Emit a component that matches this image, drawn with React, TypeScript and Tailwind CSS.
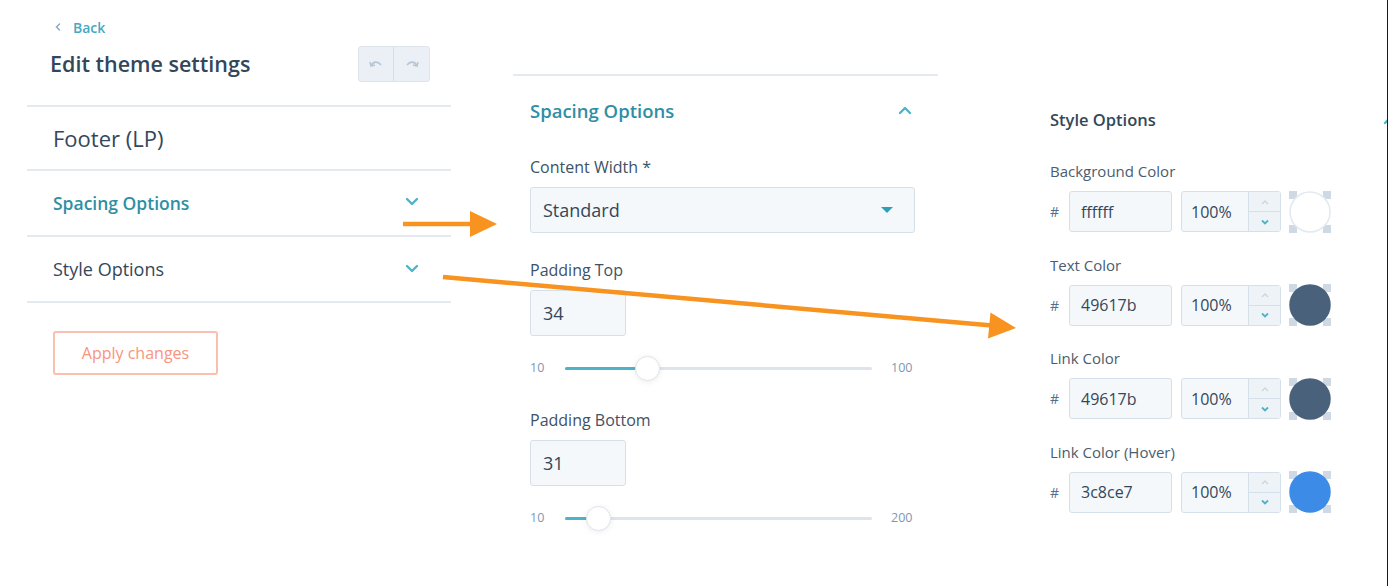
import React from "react";

const ChevronDown = ({ className = "" }: { className?: string }) => (
  <svg width="14" height="9" viewBox="0 0 14 9" className={className}>
    <path d="M2 2 L7 7 L12 2" fill="none" stroke="#4fb3c8" strokeWidth="2.4" strokeLinecap="round" strokeLinejoin="round" />
  </svg>
);

const ChevronUp = ({ className = "" }: { className?: string }) => (
  <svg width="14" height="9" viewBox="0 0 14 9" className={className}>
    <path d="M2 7 L7 2 L12 7" fill="none" stroke="#4fb3c8" strokeWidth="2.4" strokeLinecap="round" strokeLinejoin="round" />
  </svg>
);

const Slider = ({ min, max, pct }: { min: string; max: string; pct: number }) => (
  <div className="flex items-center h-[24px]">
    <span className="w-[35px] text-[12.5px] text-[#7c98b6]">{min}</span>
    <div className="relative w-[307px] h-[3px] bg-[#dfe3eb] rounded-full">
      <div className="absolute left-0 top-0 h-[3px] bg-[#4fb3c8] rounded-full" style={{ width: `${pct}px` }} />
      <div
        className="absolute top-[-11px] w-[25px] h-[25px] rounded-full bg-white border border-[#dfe3eb] shadow-[0_1px_6px_rgba(0,0,0,0.08)]"
        style={{ left: `${pct - 1}px` }}
      />
    </div>
    <span className="ml-[19px] text-[12.5px] text-[#7c98b6]">{max}</span>
  </div>
);

const Swatch = ({ color, border }: { color: string; border?: boolean }) => (
  <svg width="42" height="42" viewBox="0 0 42 42">
    <rect x="0" y="0" width="42" height="42" fill="#ffffff" />
    <rect x="0" y="0" width="8" height="8" fill="#cfd9e4" />
    <rect x="34" y="0" width="8" height="8" fill="#cfd9e4" />
    <rect x="0" y="34" width="8" height="8" fill="#cfd9e4" />
    <rect x="34" y="34" width="8" height="8" fill="#cfd9e4" />
    <circle cx="21" cy="21" r="20" fill={color} stroke={border ? "#e3e9f0" : color} strokeWidth="1.5" />
  </svg>
);

const ColorRow = ({ label, hex, color, border }: { label: string; hex: string; color: string; border?: boolean }) => (
  <div className="flex flex-col">
    <div className="h-[20px] text-[15px] text-[#4a5d70] leading-[20px] mt-[-10px]">{label}</div>
    <div className="flex items-center h-[41px] mt-[10px]">
      <span className="w-[19px] text-[14px] text-[#516f90]">#</span>
      <div className="w-[103px] h-[41px] bg-[#f5f8fa] border border-[#d6e0ea] rounded-[3px] flex items-center pl-[11px] text-[16px] text-[#33475b]">
        {hex}
      </div>
      <div className="ml-[9px] w-[100px] h-[41px] bg-[#f5f8fa] border border-[#d6e0ea] rounded-[3px] flex">
        <div className="flex-1 flex items-center pl-[9px] text-[16px] text-[#33475b]">100%</div>
        <div className="w-[32px] flex flex-col border-l border-[#d6e0ea] bg-[#eef3f8]">
          <div className="flex-1 flex items-center justify-center border-b border-[#d6e0ea]">
            <svg width="10" height="6" viewBox="0 0 10 6"><path d="M2 5 L5 2 L8 5" fill="none" stroke="#cbd6e2" strokeWidth="1.4" /></svg>
          </div>
          <div className="flex-1 flex items-center justify-center">
            <svg width="10" height="6" viewBox="0 0 10 6"><path d="M2 1.5 L5 4.5 L8 1.5" fill="none" stroke="#4fb3c8" strokeWidth="1.8" /></svg>
          </div>
        </div>
      </div>
      <div className="ml-[8px]">
        <Swatch color={color} border={border} />
      </div>
    </div>
  </div>
);

export default function App() {
  return (
    <div className="relative w-[1388px] h-[586px] bg-white overflow-hidden font-['Open_Sans',sans-serif] text-[#33475b]">
      <div className="flex h-full">
        {/* Left panel */}
        <div className="ml-[27px] w-[424px] flex flex-col">
          <div className="flex items-center h-[20px] mt-[17px] pl-[27px] text-[14px] font-semibold text-[#45a9c0]">
            <svg width="8" height="10" viewBox="0 0 8 10" className="mr-[11px]">
              <path d="M5.5 2 L2.5 5 L5.5 8" fill="none" stroke="#8fa9c1" strokeWidth="1.5" strokeLinecap="round" />
            </svg>
            Back
          </div>
          <div className="flex items-center justify-between h-[36px] mt-[9px] pl-[23px] pr-[21px]">
            <span className="text-[21.5px] font-semibold text-[#33475b]">Edit theme settings</span>
            <div className="flex h-[36px] border border-[#dfe3eb] rounded-[3px] bg-[#eaf0f6]">
              <div className="w-[35px] flex items-center justify-center border-r border-[#d5dde7]">
                <svg width="16" height="10" viewBox="0 0 16 10">
                  <path d="M3 7 C5 2, 10 2, 13 6" fill="none" stroke="#b8c6d5" strokeWidth="1.6" />
                  <path d="M2 3 L3 7 L7 6" fill="none" stroke="#b8c6d5" strokeWidth="1.6" />
                </svg>
              </div>
              <div className="w-[35px] flex items-center justify-center">
                <svg width="16" height="10" viewBox="0 0 16 10">
                  <path d="M3 6 C6 2, 11 2, 13 7" fill="none" stroke="#b8c6d5" strokeWidth="1.6" />
                  <path d="M9 6 L13 7 L14 3" fill="none" stroke="#b8c6d5" strokeWidth="1.6" />
                </svg>
              </div>
            </div>
          </div>
          <div className="mt-[23px] border-t-2 border-[#e5eaf1]" />
          <div className="h-[62px] flex items-center pl-[26px] text-[22px] font-medium text-[#33475b]">Footer (LP)</div>
          <div className="border-t-2 border-[#e5eaf1]" />
          <div className="h-[64px] flex items-center justify-between pl-[26px] pr-[32px]">
            <span className="text-[17.5px] font-semibold text-[#2e8fa4]">Spacing Options</span>
            <ChevronDown className="mt-[-4px]" />
          </div>
          <div className="border-t-2 border-[#e5eaf1]" />
          <div className="h-[64px] flex items-center justify-between pl-[26px] pr-[32px]">
            <span className="text-[18px] font-medium text-[#33475b]">Style Options</span>
            <ChevronDown className="mt-[-2px]" />
          </div>
          <div className="border-t-2 border-[#e5eaf1]" />
          <div className="pl-[26px] mt-[28px]">
            <div className="w-[165px] h-[44px] border-2 border-[#fbbfae] rounded-[3px] flex items-center justify-center text-[16px] font-medium text-[#f8957c]">
              Apply changes
            </div>
          </div>
        </div>

        {/* Middle panel */}
        <div className="ml-[62px] w-[425px] mt-[74px] flex flex-col">
          <div className="border-t-2 border-[#e5eaf1]" />
          <div className="h-[70px] flex items-center justify-between pl-[17px] pr-[26px]">
            <span className="text-[18.5px] font-semibold text-[#2e8fa4]">Spacing Options</span>
            <ChevronUp className="mt-[-2px]" />
          </div>
          <div className="pl-[17px] mt-[11px] flex flex-col">
            <div className="text-[16px] leading-[20px] text-[#3d5266]">Content Width *</div>
            <div className="mt-[10px] w-[385px] h-[46px] bg-[#f5f8fa] border border-[#d6e0ea] rounded-[3px] flex items-center justify-between pl-[12px] pr-[21px]">
              <span className="text-[18px] text-[#33475b]">Standard</span>
              <svg width="12" height="7" viewBox="0 0 12 7"><path d="M0 0 L12 0 L6 6 Z" fill="#2e9fb8" /></svg>
            </div>
            <div className="mt-[27px] text-[16px] leading-[20px] text-[#3d5266]">Padding Top</div>
            <div className="mt-[10px] w-[96px] h-[46px] bg-[#f5f8fa] border border-[#d6e0ea] rounded-[3px] flex items-center pl-[12px] text-[18px] text-[#33475b]">34</div>
            <div className="mt-[20px]">
              <Slider min="10" max="100" pct={71} />
            </div>
            <div className="mt-[30px] text-[16px] leading-[20px] text-[#3d5266]">Padding Bottom</div>
            <div className="mt-[10px] w-[96px] h-[46px] bg-[#f5f8fa] border border-[#d6e0ea] rounded-[3px] flex items-center pl-[12px] text-[18px] text-[#33475b]">31</div>
            <div className="mt-[20px]">
              <Slider min="10" max="200" pct={22} />
            </div>
          </div>
        </div>

        {/* Right panel */}
        <div className="ml-[112px] flex-1 flex flex-col relative overflow-hidden">
          <div className="flex items-center justify-between h-[20px] mt-[110px]">
            <span className="text-[16.5px] font-semibold text-[#33475b]">Style Options</span>
            <ChevronUp className="mr-[-10px]" />
          </div>
          <div className="mt-[41px] flex flex-col gap-[32.5px]">
            <ColorRow label="Background Color" hex="ffffff" color="#ffffff" border />
            <ColorRow label="Text Color" hex="49617b" color="#49617b" />
            <ColorRow label="Link Color" hex="49617b" color="#49617b" />
            <ColorRow label="Link Color (Hover)" hex="3c8ce7" color="#3c8ce7" />
          </div>
        </div>
        <div className="w-[1px] bg-[#1a1a1a]" />
      </div>

      {/* Annotation arrows */}
      <svg className="absolute left-0 top-0 pointer-events-none" width="1388" height="586" viewBox="0 0 1388 586">
        <line x1="403" y1="224" x2="472" y2="224" stroke="#f7931e" strokeWidth="4.5" />
        <polygon points="470,211 497,224 470,237" fill="#f7931e" />
        <line x1="443" y1="277" x2="992" y2="325.5" stroke="#f7931e" strokeWidth="4.5" />
        <polygon points="988,338.5 1016,328 990.5,312.5" fill="#f7931e" />
      </svg>
    </div>
  );
}
